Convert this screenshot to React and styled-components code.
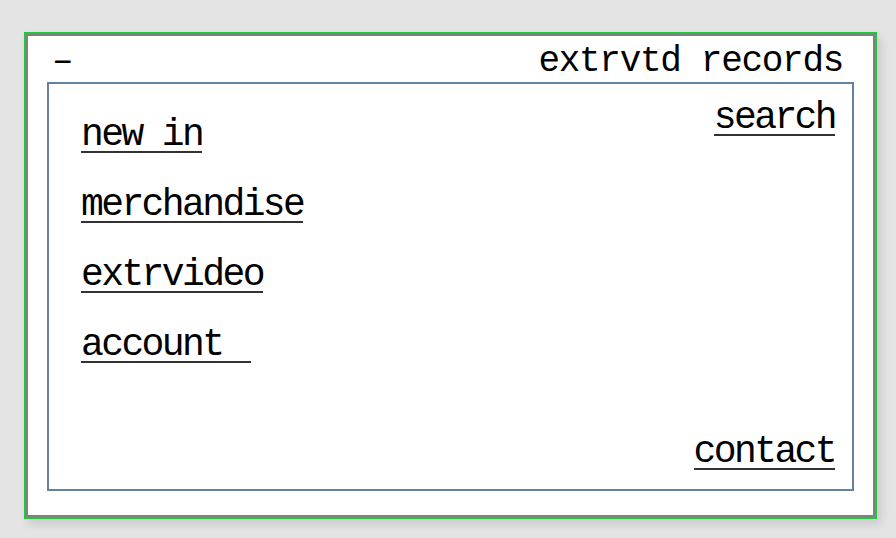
import React from 'react';
import styled, { createGlobalStyle } from 'styled-components';

const GlobalStyle = createGlobalStyle`
  html, body {
    margin: 0;
    padding: 0;
    background: #e4e4e4;
  }
  body {
    font-family: "Liberation Mono", "DejaVu Sans Mono", monospace;
  }
`;

const Page = styled.div`
  padding: 32px 0 0 24px;
  width: 896px;
  height: 538px;
  box-sizing: border-box;
`;

const Frame = styled.div`
  width: 853px;
  height: 487px;
  box-sizing: border-box;
  border: 2px solid #22c53b;
  box-shadow: 4px 5px 9px rgba(0, 0, 0, 0.12);
`;

const Window = styled.div`
  height: 100%;
  box-sizing: border-box;
  border: 2px solid #808080;
  background: #fff;
  padding: 0 19px 24px;
  display: flex;
  flex-direction: column;
`;

const TitleBar = styled.header`
  height: 46px;
  box-sizing: border-box;
  display: flex;
  justify-content: space-between;
  align-items: flex-end;
  padding: 0 11px 2px 5px;
  font-size: 36px;
  line-height: 36px;
  letter-spacing: -1.3px;
  color: #000;
`;

const Panel = styled.main`
  flex: 1;
  border: 2px solid #6581a0;
  padding: 18px 17px 19px 32px;
  display: grid;
  grid-template-columns: 1fr auto;
`;

const Nav = styled.nav`
  display: flex;
  flex-direction: column;
  align-items: flex-start;
  gap: 36px;
  padding-top: 17px;
`;

const Side = styled.div`
  display: flex;
  flex-direction: column;
  justify-content: space-between;
  align-items: flex-end;
`;

const Link = styled.a`
  display: inline-block;
  font-size: 38px;
  line-height: 32px;
  letter-spacing: -2.6px;
  color: #000;
  text-decoration: none;
  border-bottom: 2px solid #333;
  padding-right: ${p => p.$tail || 0}px;
  white-space: pre;
  cursor: pointer;
`;

const navItems = [
  { label: 'new in' },
  { label: 'merchandise' },
  { label: 'extrvideo' },
  { label: 'account', tail: 29 },
];

export default function App() {
  return (
    <>
      <GlobalStyle />
      <Page>
        <Frame>
          <Window>
            <TitleBar>
              <span>–</span>
              <span>extrvtd records</span>
            </TitleBar>
            <Panel>
              <Nav>
                {navItems.map(item => (
                  <Link key={item.label} $tail={item.tail}>{item.label}</Link>
                ))}
              </Nav>
              <Side>
                <Link>search</Link>
                <Link>contact</Link>
              </Side>
            </Panel>
          </Window>
        </Frame>
      </Page>
    </>
  );
}
